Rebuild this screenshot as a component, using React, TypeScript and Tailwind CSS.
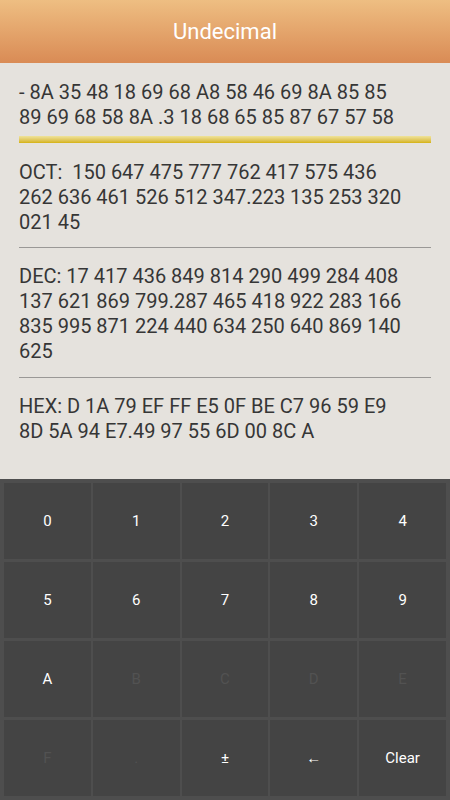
import React from "react";

const font = { fontFamily: "Roboto, 'Noto Sans', sans-serif" };

const keys: { label: string; on: boolean }[] = [
  { label: "0", on: true },
  { label: "1", on: true },
  { label: "2", on: true },
  { label: "3", on: true },
  { label: "4", on: true },
  { label: "5", on: true },
  { label: "6", on: true },
  { label: "7", on: true },
  { label: "8", on: true },
  { label: "9", on: true },
  { label: "A", on: true },
  { label: "B", on: false },
  { label: "C", on: false },
  { label: "D", on: false },
  { label: "E", on: false },
  { label: "F", on: false },
  { label: ".", on: false },
  { label: "±", on: true },
  { label: "←", on: true },
  { label: "Clear", on: true },
];

function Lines({ lines }: { lines: string[] }) {
  return (
    <div className="text-[20px] leading-[25px] text-[#363636]">
      {lines.map((l) => (
        <div key={l} className="whitespace-pre">
          {l}
        </div>
      ))}
    </div>
  );
}

export default function App() {
  return (
    <div className="flex h-[800px] w-[450px] flex-col bg-[#e5e2dd]" style={font}>
      <header className="flex h-[63px] shrink-0 items-center justify-center bg-gradient-to-b from-[#eebe82] to-[#d98b55]">
        <h1 className="text-[22px] text-white">Undecimal</h1>
      </header>

      <main className="flex-1 px-[19px]">
        <div className="pt-[17px]">
          <Lines
            lines={[
              "- 8A 35 48 18 69 68 A8 58 46 69 8A 85 85",
              "89 69 68 58 8A .3 18 68 65 85 87 67 57 58",
            ]}
          />
        </div>
        <div className="mt-[6px] h-[7px] bg-gradient-to-b from-[#efe39a] to-[#d6b300]" />

        <div className="mt-[17px]">
          <Lines
            lines={[
              "OCT:  150 647 475 777 762 417 575 436",
              "262 636 461 526 512 347.223 135 253 320",
              "021 45",
            ]}
          />
        </div>
        <div className="mt-[12px] h-px bg-[#9a9896]" />

        <div className="mt-[16px]">
          <Lines
            lines={[
              "DEC: 17 417 436 849 814 290 499 284 408",
              "137 621 869 799.287 465 418 922 283 166",
              "835 995 871 224 440 634 250 640 869 140",
              "625",
            ]}
          />
        </div>
        <div className="mt-[13px] h-px bg-[#9a9896]" />

        <div className="mt-[16px]">
          <Lines
            lines={[
              "HEX: D 1A 79 EF FF E5 0F BE C7 96 59 E9",
              "8D 5A 94 E7.49 97 55 6D 00 8C A",
            ]}
          />
        </div>
      </main>

      <div className="grid h-[321px] shrink-0 grid-cols-5 grid-rows-4 gap-x-[2px] gap-y-[3px] bg-[#4e4e4e] p-[4px]">
        {keys.map((k) => (
          <button
            key={k.label}
            className={
              "flex items-center justify-center bg-[#444444] text-[15px] " +
              (k.on ? "text-white" : "text-[#525252]")
            }
          >
            {k.label}
          </button>
        ))}
      </div>
    </div>
  );
}
